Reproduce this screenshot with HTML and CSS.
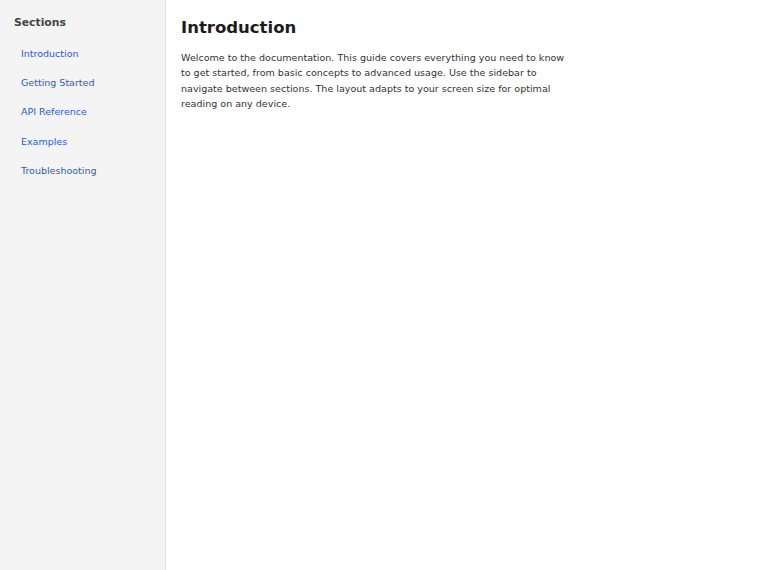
FILE: index.html
```html
<!DOCTYPE html>
<html lang="en">
<head>
<meta charset="utf-8">
<title>Documentation</title>
<link rel="stylesheet" href="styles.css">
</head>
<body>
<div class="layout">
  <nav class="sidebar">
    <h2 class="sidebar-title">Sections</h2>
    <ul class="nav-list">
      <li><a href="#intro">Introduction</a></li>
      <li><a href="#start">Getting Started</a></li>
      <li><a href="#api">API Reference</a></li>
      <li><a href="#examples">Examples</a></li>
      <li><a href="#trouble">Troubleshooting</a></li>
    </ul>
  </nav>
  <main class="content">
    <h1 class="page-title" id="intro">Introduction</h1>
    <p class="lead">Welcome to the documentation. This guide covers everything you need to know to get started, from basic concepts to advanced usage. Use the sidebar to navigate between sections. The layout adapts to your screen size for optimal reading on any device.</p>
  </main>
</div>
</body>
</html>
```

FILE: styles.css
```css
html, body {
  margin: 0;
  padding: 0;
  height: 100%;
}

body {
  font-family: "DejaVu Sans", sans-serif;
  background: #ffffff;
  color: #333333;
}

.layout {
  display: flex;
  min-height: 100%;
}

.sidebar {
  width: 166px;
  flex-shrink: 0;
  background: #f4f4f4;
  border-right: 1px solid #e2e2e2;
  padding: 16px 14px;
  box-sizing: border-box;
}

.sidebar-title {
  margin: 0 0 8.6px;
  font-size: 10.8px;
  font-weight: bold;
  color: #444444;
  line-height: 14px;
}

.nav-list {
  list-style: none;
  margin: 0;
  padding: 0 0 0 7px;
}

.nav-list li {
  font-size: 9.5px;
  line-height: 29.4px;
}

.nav-list a {
  color: #2b5bd0;
  text-decoration: none;
}

.content {
  flex: 1;
  padding: 16px 15px;
}

.page-title {
  margin: 0 0 10px;
  font-size: 16.5px;
  font-weight: bold;
  color: #1c1c1c;
  line-height: 24px;
}

.lead {
  margin: 0;
  max-width: 392px;
  font-size: 9.55px;
  line-height: 15.3px;
  color: #333333;
}
```
